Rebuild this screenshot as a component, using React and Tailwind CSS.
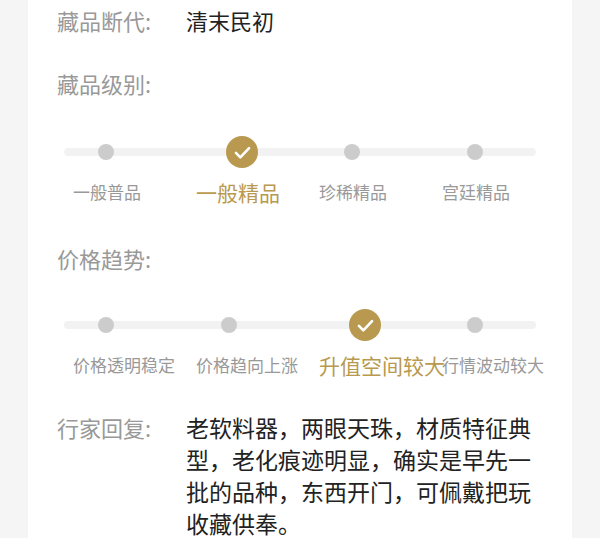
const font = { fontFamily: '"Noto Sans CJK SC", "Noto Sans", sans-serif' };

function Check() {
  return (
    <div className="ml-[30px] flex h-[32px] w-[32px] items-center justify-center rounded-full bg-[#b8994f]">
      <svg width="21" height="21" viewBox="0 0 24 24" fill="none" stroke="white" strokeWidth="3" strokeLinecap="round" strokeLinejoin="round">
        <path d="M4.5 12.5l5 5L19.5 7" />
      </svg>
    </div>
  );
}

function Dot() {
  return <div className="ml-[25px] h-4 w-4 rounded-full bg-[#cccccc]" />;
}

function Steps({ items, active, gap }) {
  return (
    <div className={gap}>
      <div className="relative h-[32px]">
        <div className="absolute left-[36px] top-1/2 h-2 w-[472px] -translate-y-1/2 rounded-full bg-[#f2f2f2]" />
        <div className="relative grid h-full grid-cols-[123px_123px_123px_123px] pl-[45px]">
          {items.map((it, i) => (
            <div key={it} className="flex items-center">
              {i === active ? <Check /> : <Dot />}
            </div>
          ))}
        </div>
      </div>
      <div className="mt-3 grid h-6 grid-cols-[123px_123px_123px_123px] pl-[45px]">
        {items.map((it, i) => (
          <div key={it} className="flex items-center whitespace-nowrap">
            {i === active ? (
              <span className="text-[21px] leading-6 text-[#b8994f]">{it}</span>
            ) : (
              <span className="text-[17px] leading-6 text-[#999999]">{it}</span>
            )}
          </div>
        ))}
      </div>
    </div>
  );
}

export default function App() {
  return (
    <div className="min-h-[538px] bg-[#f5f5f5]" style={font}>
      <div className="mx-[28px] min-h-[538px] bg-white">
        <div className="flex h-[40px] items-center pl-[29px]">
          <span className="w-[129px] text-[22px] text-[#999999]">藏品断代:</span>
          <span className="text-[22px] text-[#222222]">清末民初</span>
        </div>

        <div className="mt-[23px] flex h-[40px] items-center pl-[29px]">
          <span className="text-[22px] text-[#999999]">藏品级别:</span>
        </div>

        <Steps items={['一般普品', '一般精品', '珍稀精品', '宫廷精品']} active={1} gap="mt-[33px]" />

        <div className="mt-[34px] flex h-[40px] items-center pl-[29px]">
          <span className="text-[22px] text-[#999999]">价格趋势:</span>
        </div>

        <Steps items={['价格透明稳定', '价格趋向上涨', '升值空间较大', '行情波动较大']} active={2} gap="mt-[31px]" />

        <div className="mt-[34px] flex pl-[29px]">
          <span className="w-[129px] shrink-0 text-[22px] leading-[32px] text-[#999999]">行家回复:</span>
          <p className="w-[350px] text-[23px] leading-[32px] text-[#222222]">
            老软料器，两眼天珠，材质特征典型，老化痕迹明显，确实是早先一批的品种，东西开门，可佩戴把玩收藏供奉。
          </p>
        </div>
      </div>
    </div>
  );
}
